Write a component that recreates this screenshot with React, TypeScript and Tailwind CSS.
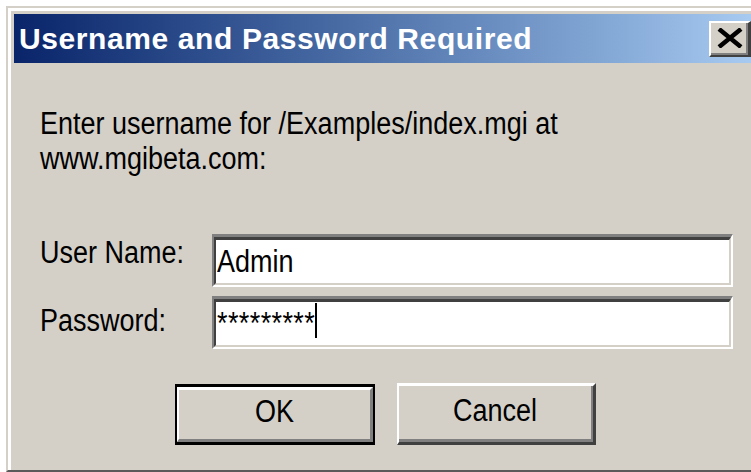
import type { ReactNode } from 'react'

// Classic bevel colours
const FACE = 'bg-[#d4d0c8]'

function Txt({ children, className = '' }: { children: ReactNode; className?: string }) {
  return <span className={`block origin-center scale-y-[1.18] whitespace-nowrap ${className}`}>{children}</span>
}

function Field({ children }: { children: ReactNode }) {
  return (
    <div className="h-[53px] w-[521px] border-t-[3px] border-l-[2px] border-b-[2px] border-r-[2px] border-t-[#808080] border-l-[#808080] border-b-white border-r-white">
      <div className="h-full border-t-[3px] border-l-[2px] border-b-[2px] border-r-[2px] border-t-[#404040] border-l-[#404040] border-b-[#d4d0c8] border-r-[#d4d0c8] bg-white">
        {children}
      </div>
    </div>
  )
}

function CloseButton() {
  return (
    <div className="mt-[7px] h-[36px] w-[42px] shrink-0 border-t-[2px] border-l-[2px] border-b-[2px] border-r-[3px] border-t-white border-l-white border-b-[#404040] border-r-[#404040]">
      <div className={`flex h-full items-center justify-center border-b-[2px] border-r-[2px] border-[#808080] ${FACE}`}>
        <svg width="26" height="20" viewBox="0 0 26 20" className="ml-[2px]">
          <path d="M2 1 L24 19 M24 1 L2 19" stroke="#000" strokeWidth="4.5" />
        </svg>
      </div>
    </div>
  )
}

export default function App() {
  return (
    <div className="h-[472px] w-[751px] overflow-hidden bg-white pl-[6px] pt-[6px] font-['Liberation_Sans',Arial,sans-serif]">
      <div className="h-[466px] w-[760px] border-t-[2px] border-l-[2px] border-b-[2px] border-t-[#d4d0c8] border-l-[#d4d0c8] border-b-[#5a5a5a]">
        <div className={`h-full border-t-[3px] border-l-[3px] border-white pl-[3px] pt-[3px] ${FACE}`}>
          {/* caption bar */}
          <div className="flex h-[49px] w-[737px] items-start bg-gradient-to-r from-[#0a246a] to-[#a6caf0]">
            <div className="flex-1 pl-[5px] text-[30px] font-bold leading-[49px] tracking-[0.6px] text-white">
              Username and Password Required
            </div>
            <CloseButton />
          </div>

          {/* client area */}
          <div className="pl-[26px] pt-[43px] text-[27px] leading-[35px] text-black">
            <Txt>Enter username for /Examples/index.mgi at</Txt>
            <Txt>www.mgibeta.com:</Txt>

            <div className="mt-[58px] flex">
              <div className="w-[172px] pt-[1px]">
                <Txt>User Name:</Txt>
              </div>
              <Field>
                <div className="pl-[1px] pt-[4px]">
                  <Txt>Admin</Txt>
                </div>
              </Field>
            </div>

            <div className="mt-[9px] flex">
              <div className="w-[172px] pt-[7px]">
                <Txt>Password:</Txt>
              </div>
              <Field>
                <div className="flex items-start pl-[1px]">
                  <Txt className="mt-[4px] tracking-[0.4px]">*********</Txt>
                  <span className="mt-[1px] h-[35px] w-[2px] bg-black" />
                </div>
              </Field>
            </div>

            <div className="ml-[135px] mt-[35px] flex items-start gap-[22px]">
              {/* default button: black outline */}
              <div className="h-[61px] w-[200px] border-t-[3px] border-l-[2px] border-b-[3px] border-r-[2px] border-black">
                <div className="flex h-full items-center justify-center border-t-[3px] border-l-[2px] border-b-[3px] border-r-[3px] border-t-white border-l-white border-b-[#808080] border-r-[#808080] pb-[6px]">
                  <Txt>OK</Txt>
                </div>
              </div>
              <div className="-mt-[1px] h-[62px] w-[199px] border-t-[3px] border-l-[2px] border-b-[3px] border-r-[3px] border-t-white border-l-white border-b-[#404040] border-r-[#404040]">
                <div className="flex h-full items-center justify-center border-b-[3px] border-r-[2px] border-[#808080] pb-[4px]">
                  <Txt>Cancel</Txt>
                </div>
              </div>
            </div>
          </div>
        </div>
      </div>
    </div>
  )
}
